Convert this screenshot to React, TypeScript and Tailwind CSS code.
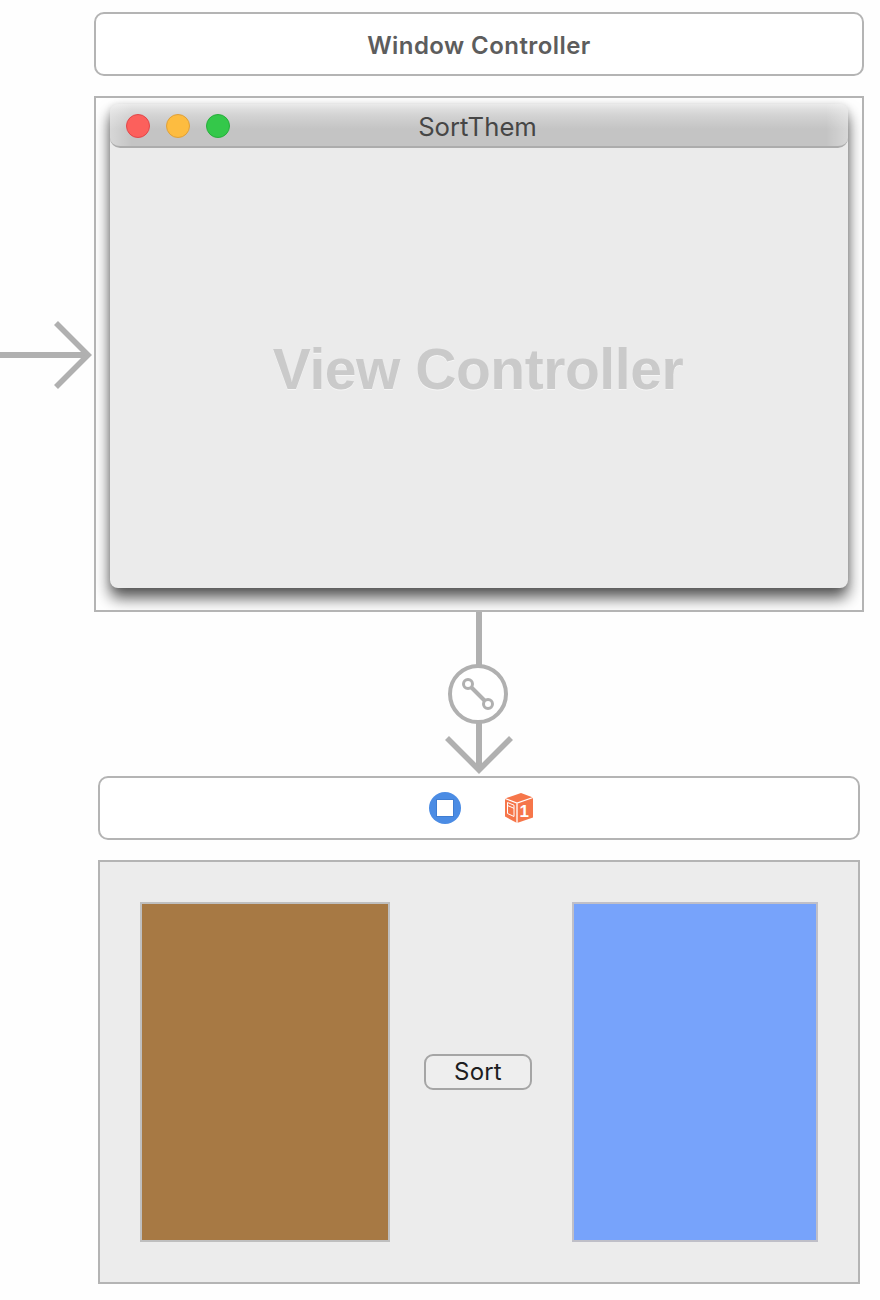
import React from "react";

function EntryArrow() {
  return (
    <svg className="mt-[218px] h-20 w-[94px] shrink-0" viewBox="0 0 94 80" fill="none" stroke="#b0b0b0" strokeWidth="6">
      <path d="M0 41H86" />
      <path d="M56 9L88 41L56 73" strokeWidth="5.6" />
    </svg>
  );
}

function Segue() {
  return (
    <svg className="ml-[434px] h-[164px] w-[90px] shrink-0" viewBox="0 0 90 164" fill="none" stroke="#b0b0b0">
      <path d="M45 0V54M45 110V158" strokeWidth="6" />
      <circle cx="44" cy="82" r="28" strokeWidth="4" fill="#fff" />
      <path d="M37 75L51 89" strokeWidth="4" />
      <circle cx="34" cy="72" r="4.5" strokeWidth="3" />
      <circle cx="54" cy="92" r="4.5" strokeWidth="3" />
      <path d="M13 126L45 158L77 126" strokeWidth="5.6" />
    </svg>
  );
}

function ViewControllerIcon() {
  return (
    <svg className="size-8" viewBox="0 0 32 32">
      <circle cx="16" cy="16" r="16" fill="#4b8ce4" />
      <rect x="7.5" y="7.5" width="17" height="17" fill="#fff" stroke="#3f7dd2" strokeWidth="1" />
    </svg>
  );
}

function FirstResponderIcon() {
  return (
    <svg className="h-8 w-[30px]" viewBox="0 0 30 32">
      <path d="M17 1L29 5.5V25.5L13 31L1 24.5V6.5Z" fill="#f6764a" />
      <path d="M1 6.5L13 11L29 5.5M13 11V31" fill="none" stroke="#fff" strokeWidth="1.3" />
      <path d="M3.5 10.5L10 13.2V24.5L3.5 21.5ZM3.5 13.5L10 16.3" fill="none" stroke="#fff" strokeWidth="1" />
      <text x="15.4" y="25" fontFamily="Liberation Sans, sans-serif" fontSize="17" fontWeight="700" fill="#fff">1</text>
    </svg>
  );
}

function Titlebar() {
  return (
    <div className="flex h-11 shrink-0 items-center rounded-t-[8px] rounded-b-[10px] border-b-2 border-[#acacac] bg-[linear-gradient(to_right,#ffffff55,#ffffff00_22px,#ffffff00_716px,#ffffff55),linear-gradient(to_bottom,#ebebeb,#dedede_5px,#d2d2d2_12px,#c4c4c4_25px,#c4c4c4)] pl-4">
      <div className="flex w-[104px] gap-4 pt-0.5">
        <span className="size-6 rounded-full border border-[#e1474a] bg-[#fc605c]" />
        <span className="size-6 rounded-full border border-[#dfa03a] bg-[#fdbc40]" />
        <span className="size-6 rounded-full border border-[#27ae3b] bg-[#34c84a]" />
      </div>
      <span className="mr-[123px] flex-1 pt-1 text-center font-['Inter',sans-serif] text-[25.7px] leading-8 text-[#464646]">SortThem</span>
    </div>
  );
}

export default function App() {
  return (
    <main className="h-[1300px] w-[880px] overflow-hidden bg-[#fefefe] font-['Inter',sans-serif]">
      <div className="flex h-[612px] pt-[6px]">
        <div className="w-[94px] shrink-0 pt-[90px]">
          <EntryArrow />
        </div>
        <div className="w-[770px] pt-1.5">
          <header className="flex h-16 items-center justify-center rounded-[10px] border-2 border-[#b4b4b4] bg-white pt-[3px] text-[24px] font-semibold tracking-[0.44px] text-[#5d5d5d]">
            Window Controller
          </header>
          <section className="mt-5 h-[516px] overflow-hidden border-2 border-[#b4b4b4] bg-white px-3.5 pt-1.5">
            <div className="flex h-[484px] flex-col rounded-[8px] bg-[#ebebeb] shadow-[0_10px_15px_0_#000000a8,0_1px_7px_0_#00000020]">
              <Titlebar />
              <div className="flex flex-1 items-center justify-center pt-0.5 pr-0.5">
                <h1 className="font-['Liberation_Sans',sans-serif] text-[57px] leading-none font-bold tracking-[-0.45px] text-[#cacaca] [text-shadow:0_1px_0_#f6f6f6]">View Controller</h1>
              </div>
            </div>
          </section>
        </div>
      </div>
      <Segue />
      <div className="ml-[98px] w-[762px]">
        <div className="flex h-16 items-center justify-center gap-[43px] rounded-[10px] border-2 border-[#b4b4b4] bg-white pl-[5px]">
          <ViewControllerIcon />
          <FirstResponderIcon />
        </div>
        <section className="mt-5 flex h-[424px] items-center border-2 border-[#b4b4b4] bg-[#ececec] px-10">
          <div className="h-[340px] w-[250px] border-2 border-[#bfbfbf] bg-[#a77944]" />
          <button className="ml-[34px] h-9 w-[108px] rounded-[9px] border-2 border-[#a5a5a5] bg-[#eeeeee] text-[24px] leading-8 tracking-[0.2px] text-[#1d1d1f]">Sort</button>
          <div className="ml-10 h-[340px] w-[246px] border-2 border-[#bfbfc8] bg-[#77a3fb]" />
        </section>
      </div>
    </main>
  );
}
